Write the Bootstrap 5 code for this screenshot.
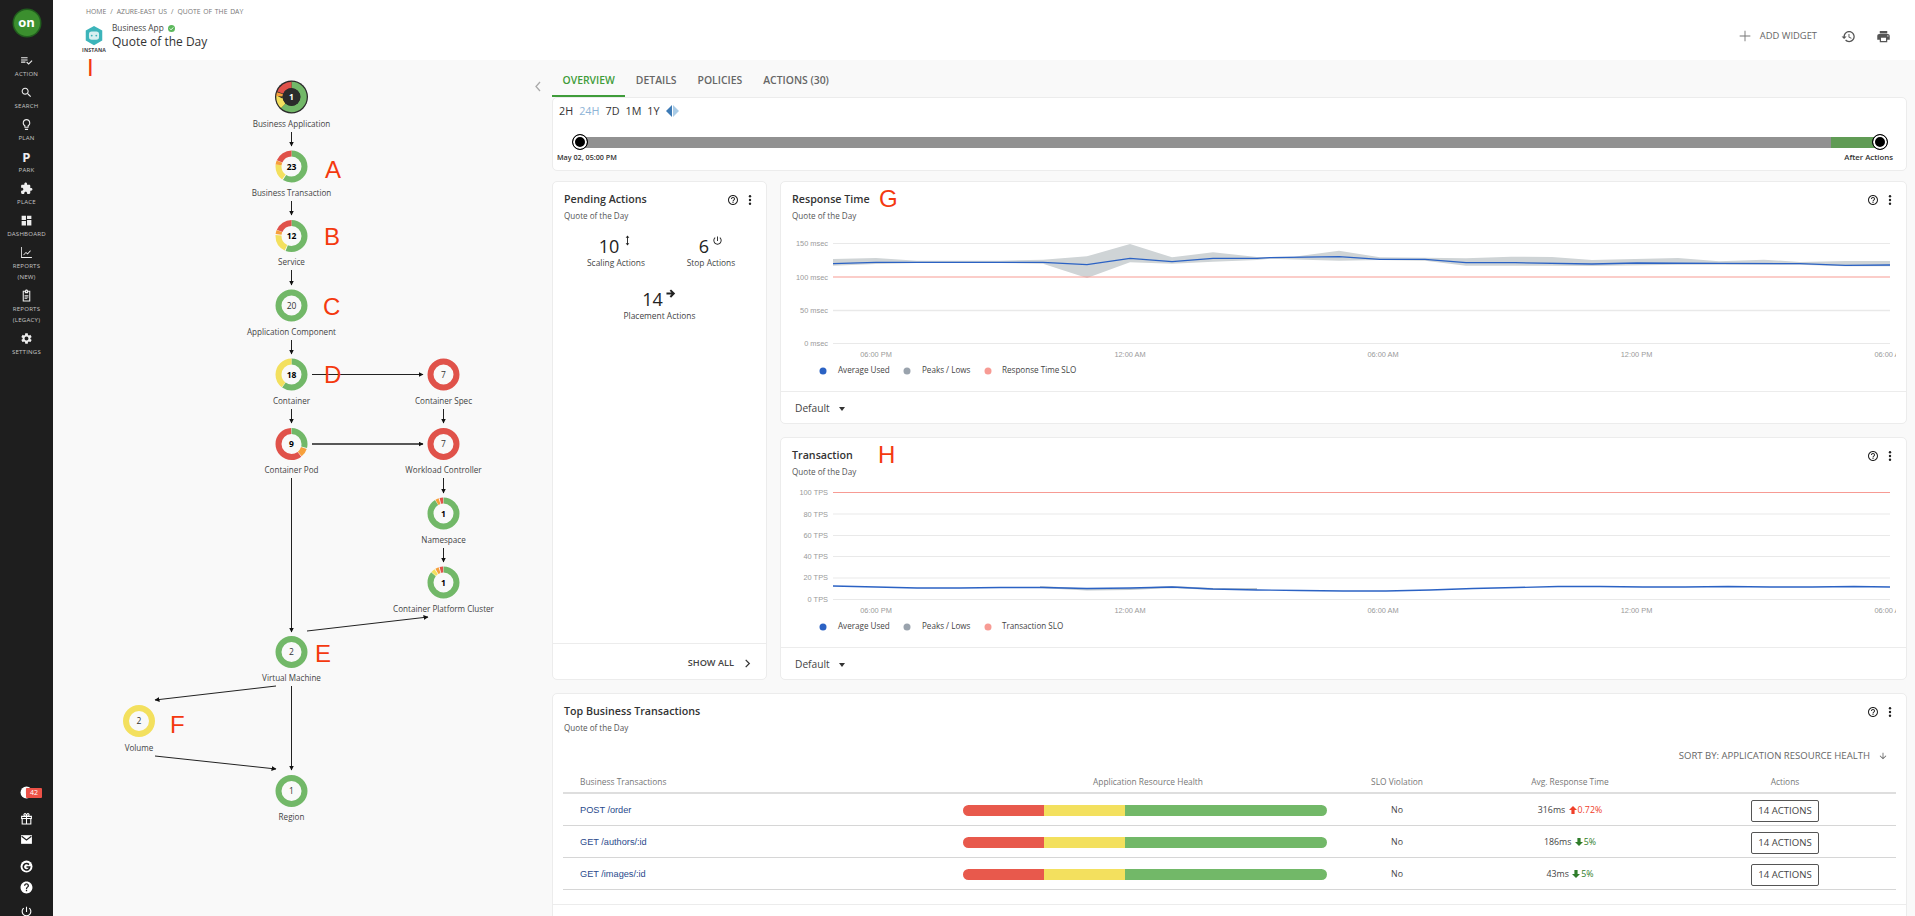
<!doctype html>
<html lang="en">
<head>
<meta charset="utf-8">
<title>Quote of the Day</title>
<link href="https://cdn.jsdelivr.net/npm/bootstrap@5.3.0/dist/css/bootstrap.min.css" rel="stylesheet">
<style>
html,body{height:916px;overflow:hidden}
body{font-family:"Open Sans","Noto Sans",sans-serif;background:#f9f9f9;color:#333;font-size:10px}
.rail{width:53px;flex:none;background:#1e1e1e;height:916px;color:#c4c4c4;overflow:hidden}
.rail-logo{width:26px;height:26px;border-radius:50%;background:#3b8f2e;box-shadow:0 0 0 1.5px #215e1e;color:#fff;font-weight:700;font-size:13px;line-height:24px;text-align:center;margin:10px auto 18px}
.rail-item{height:32px;text-align:center;font-size:6.1px;letter-spacing:.2px;line-height:11px;text-transform:uppercase}
.rail-item svg{display:block;margin:0 auto 1px;width:13px;height:13px;fill:#eee}
.rail-item.tall{height:43px}
.rail-p{display:block;font-size:13px;line-height:14px;font-weight:700;color:#eee}
.rail-foot{margin-bottom:-6px}
.rail-foot svg{display:block;margin:0 auto;width:13px;height:13px;fill:#fff}
.rail-bell{position:relative;height:13px;margin-bottom:13px}
.rail-count{position:absolute;left:26px;top:2px;background:#ec5147;color:#fff;font-size:7px;line-height:10px;width:16px;text-align:center;border-radius:1px}
.rail-gap-a{margin-top:8px!important;margin-bottom:8px!important}
.rail-gap-b{margin-top:14px!important}
.rail-gap-c{margin-top:8px!important}
.rail-gap-d{margin-top:11px!important}
.top-bar{height:60px;background:#fff;flex:none}
.crumbs{font-size:6.8px;color:#777;padding-top:7px;padding-left:33px;line-height:10px;word-spacing:1px}
.crumbs i{font-style:normal;padding:0 4px}
.title-row{padding-left:29px;margin-top:3px}
.logo-box{width:24px;margin-right:6px;margin-top:5px}
.app-kind{font-size:8.3px;line-height:12px;color:#444;margin-top:2px}
.app-name{font-size:12px;line-height:16px;color:#333}
.logo-word{font-size:5.2px;font-weight:700;letter-spacing:.1px;color:#444;line-height:6px;text-align:center}
.tool-text{font-size:9.4px;color:#666;margin:0 24px 0 7px}
.tools-end{padding:12px 24px 0 0;height:60px}
.map{width:499px;flex:none;height:856px}
.map svg{display:block;overflow:visible}
.map text{font-family:"Open Sans",sans-serif}
.map .lbl{font-size:8.1px;fill:#444;text-anchor:middle}
.map .num{font-size:8.5px;fill:#333;text-anchor:middle}
.map .numb{font-size:8.5px;font-weight:700;fill:#000;text-anchor:middle}
.map text.mark-r,.mark-r{font-family:"Liberation Sans",sans-serif;font-size:24px;color:#f4390f;fill:#f4390f;line-height:24px}
.mark-top{position:absolute;top:5px}
.panel{width:1355px;flex:none}
.tab-row{height:37px;padding-top:12px}
.tab-link{font-size:10.4px;font-weight:600;color:#666;padding:0 10.5px;height:25px;line-height:16px}
.tab-link.on{color:#3f9c3a;border-bottom:2px solid #3f9c3a}
.pane{background:#fff;border:1px solid #ececec;border-radius:5px}
.range{height:74px;padding:5px 6px;position:relative}
.range-btn{font-size:10.8px;color:#333;margin-right:6px;line-height:16px}
.range-btn.on{color:#8db4d6}
.track{position:absolute;left:27px;right:26px;top:39px;height:11px;background:#919191}
.track b{position:absolute;right:0;top:0;bottom:0;width:49px;background:#609b55}
.knob{position:absolute;width:16px;height:16px;border-radius:50%;background:#000;border:1.5px solid #000;box-shadow:inset 0 0 0 2px #fff;top:-3px}
.knob.a{left:-8px}.knob.b{right:-8px}
.range-l{position:absolute;font-weight:600;color:#333;top:54px;line-height:10px}
.range-l.s{font-size:7.2px;left:4px}
.range-l.e{font-size:7.8px;right:13px}
.pane-head{padding:9px 11px 0 11px;position:relative}
.pane-head.fixed{height:47px}
.pane-title{font-size:10.7px;font-weight:600;color:#333;line-height:16px}
.pane-sub{font-size:8.1px;color:#555;line-height:16px;margin-top:1px}
.pane-tools{position:absolute;right:10px;top:12px;gap:5px}
.pane-tools svg{width:12px;height:12px;fill:#222}
.stat{font-size:8.4px;color:#444;text-align:center;line-height:12px}
.stat-n{font-size:18px;color:#222;line-height:22px}
.stat-n svg{width:11px;height:11px;fill:#222;vertical-align:7px;margin-left:3px}
.pend{width:215px;height:499px}
.stat-area{padding-top:11px}
.stat-two{padding:0 25px 0 28px}
.w-a{width:70px}.w-b{width:60px}
.w-c{width:90px;margin-top:19px;transform:none}
.show-all{height:36px;border-top:1px solid #ececec;font-size:9.2px;font-weight:600;color:#444;padding:3px 14px 0 0;gap:9px}
.chart-foot{height:32px;border-top:1px solid #ececec;font-size:10.2px;color:#444;padding:2px 0 0 14px;gap:9px}
.caret-s{width:0;height:0;border:3.5px solid transparent;border-top:4px solid #333;border-bottom:0}
.chart-a,.chart-b{height:243px}
.chart-svg{display:block}
.chart-svg text{font-family:"Liberation Sans",sans-serif;font-size:7.4px;fill:#9a9a9a}
.chart-svg .lg{font-family:"Open Sans",sans-serif;font-size:8.1px;fill:#444}
.stack{gap:13px}
.stack-top{margin-top:10px}
.wide{height:250px;position:relative;margin-top:13px}
.sort-row{font-size:9.55px;color:#666;text-align:right;padding-right:18px;line-height:14px;position:absolute;right:0;top:55px}
.sort-row svg{width:10px;height:10px;fill:#666;margin-left:8px}
.tx-table{position:absolute;left:10px;top:78px;width:1333px;table-layout:fixed;margin:0}
.tx-table th{font-weight:400;font-size:8.4px;color:#777;height:21px;padding:0;text-align:center;vertical-align:middle;border-bottom:2px solid #dedede}
.tx-table td{font-size:8.8px;color:#444;height:32px;padding:3px 0 0;text-align:center;vertical-align:middle;border-bottom:1px solid #d6d6d6}
.tx-table td.nm{text-align:left;padding-left:17px;font-family:"Liberation Sans",sans-serif;font-size:9.2px;color:#2a4a8c}
.tx-table th.nm{text-align:left;padding-left:17px}
.tx-table .endc{padding-right:18px}
.health{display:flex;width:364px;height:11px;border-radius:6px;overflow:hidden;margin-left:13px}
.health i{display:block}
.h-r{background:#e8594c;width:81px}.h-y{background:#f3e05e;width:81px}.h-g{background:#72b868;flex:1}
.act-btn{font-size:9.6px;width:68px;height:22px;padding:0;border:1px solid #555;border-radius:2px;color:#444;background:#fff;line-height:20px}
.up{color:#f0402a}.dn{color:#2f7d2a}
.arr{display:inline-block;width:8px;height:8px;vertical-align:-1px;margin:0 1px}
.foot-line{position:absolute;left:0;right:0;top:210px;border-top:1px solid #ececec}
</style>
</head>
<body class="d-flex">
<nav class="rail d-flex flex-column">
  <div class="rail-logo">on</div>
  <div class="rail-item"><svg viewBox="0 0 24 24"><path d="M14 10H2v2h12v-2zm0-4H2v2h12V6zM2 16h8v-2H2v2zm19.500-4.500L23 13l-6.990 7-4.510-4.500L13 14l3.010 3 5.490-5.500z"/></svg>Action</div>
  <div class="rail-item"><svg viewBox="0 0 24 24"><path d="M15.500 14h-.79l-.28-.27C15.410 12.590 16 11.110 16 9.500 16 5.910 13.090 3 9.500 3S3 5.910 3 9.500 5.910 16 9.500 16c1.610 0 3.090-.59 4.230-1.570l.27.28v.79l5 4.990L20.490 19l-4.990-5zm-6 0C7.010 14 5 11.990 5 9.500S7.010 5 9.500 5 14 7.010 14 9.500 11.990 14 9.500 14z"/></svg>Search</div>
  <div class="rail-item"><svg viewBox="0 0 24 24"><path d="M9 21c0 .55.45 1 1 1h4c.55 0 1-.45 1-1v-1H9v1zm3-19C8.140 2 5 5.140 5 9c0 2.380 1.190 4.470 3 5.740V17c0 .55.45 1 1 1h6c.55 0 1-.45 1-1v-2.260c1.810-1.270 3-3.360 3-5.740 0-3.860-3.140-7-7-7zm2.850 11.100l-.85.6V16h-4v-2.300l-.85-.6C7.800 12.160 7 10.630 7 9c0-2.760 2.240-5 5-5s5 2.240 5 5c0 1.630-.8 3.160-2.150 4.100z"/></svg>Plan</div>
  <div class="rail-item"><span class="rail-p">P</span>Park</div>
  <div class="rail-item"><svg viewBox="0 0 24 24"><path d="M20.500 11H19V7c0-1.100-.9-2-2-2h-4V3.500C13 2.120 11.880 1 10.500 1S8 2.120 8 3.500V5H4c-1.100 0-1.990.9-1.990 2v3.800H3.500c1.490 0 2.700 1.210 2.700 2.700s-1.210 2.700-2.700 2.700H2V20c0 1.100.9 2 2 2h3.800v-1.500c0-1.490 1.210-2.700 2.700-2.700 1.490 0 2.700 1.210 2.700 2.700V22H17c1.100 0 2-.9 2-2v-4h1.500c1.380 0 2.500-1.120 2.500-2.500S21.880 11 20.500 11z"/></svg>Place</div>
  <div class="rail-item"><svg viewBox="0 0 24 24"><path d="M3 11h8V3H3v8zm0 10h8v-8H3v8zm10 0h8V11h-8v10zm0-18v6h8V3h-8z"/></svg>Dashboard</div>
  <div class="rail-item tall"><svg viewBox="0 0 24 24"><path d="M2 2h1.500v18.500H22V22H2zM6 16l5-5 3 2.500 5-5.500 1 1-6 6.500-3-2.500-4 4z"/></svg>Reports<br>(New)</div>
  <div class="rail-item tall"><svg viewBox="0 0 24 24"><path d="M19 3h-4.180C14.400 1.840 13.300 1 12 1c-1.300 0-2.400.84-2.820 2H5v20h14V3zm-7 0c.55 0 1 .45 1 1s-.45 1-1 1-1-.45-1-1 .45-1 1-1zm5 18H7V5h2v3h6V5h2v16zM8.500 11h7v1.500h-7zm0 3h7v1.500h-7zm0 3h5v1.500h-5z"/></svg>Reports<br>(Legacy)</div>
  <div class="rail-item"><svg viewBox="0 0 24 24"><path d="M19.140 12.940c.04-.3.06-.61.06-.94 0-.32-.02-.64-.07-.94l2.030-1.580c.18-.14.23-.41.12-.61l-1.920-3.320c-.12-.22-.37-.29-.59-.22l-2.390.96c-.5-.38-1.030-.7-1.620-.94l-.36-2.540c-.04-.24-.24-.41-.48-.41h-3.840c-.24 0-.43.17-.47.41l-.36 2.540c-.59.24-1.130.57-1.620.94l-2.390-.96c-.22-.08-.47 0-.59.22L2.740 8.870c-.12.21-.08.47.12.61l2.030 1.580c-.05.3-.09.63-.09.94s.02.64.07.94l-2.030 1.580c-.18.14-.23.41-.12.61l1.920 3.320c.12.22.37.29.59.22l2.390-.96c.5.38 1.030.7 1.620.94l.36 2.540c.05.24.24.41.48.41h3.840c.24 0 .44-.17.47-.41l.36-2.540c.59-.24 1.130-.56 1.620-.94l2.390.96c.22.08.47 0 .59-.22l1.920-3.320c.12-.22.07-.47-.12-.61l-2.010-1.580zM12 15.600c-1.980 0-3.600-1.620-3.600-3.600s1.620-3.600 3.600-3.600 3.600 1.620 3.600 3.600-1.620 3.600-3.600 3.600z"/></svg>Settings</div>
  <div class="rail-foot mt-auto">
    <div class="rail-bell"><svg viewBox="0 0 24 24"><circle cx="12" cy="12" r="11"/><rect x="11" y="5" width="2.500" height="9" fill="#1e1e1e"/></svg><span class="rail-count">42</span></div>
    <svg viewBox="0 0 24 24"><path d="M3 8h18v4H3zM4 12h16v10H4z" fill="none" stroke="#fff" stroke-width="2"/><path d="M12 8v14M12 8C8 8 6 6 8 3.500S12 5 12 8c0-3 2-7 4-4.500S16 8 12 8z" fill="none" stroke="#fff" stroke-width="2"/></svg>
    <svg viewBox="0 0 24 24" class="rail-gap-a"><path d="M2 4h20v16H2z"/><path d="M3 6l9 7 9-7" fill="none" stroke="#1e1e1e" stroke-width="2"/></svg>
    <svg viewBox="0 0 24 24" class="rail-gap-b"><circle cx="12" cy="12" r="11"/><path d="M16.500 8.500A6 6 0 1 0 18 13h-6" fill="none" stroke="#1e1e1e" stroke-width="3"/></svg>
    <svg viewBox="0 0 24 24" class="rail-gap-c"><path d="M12 1C5.900 1 1 5.900 1 12s4.900 11 11 11 11-4.900 11-11S18.100 1 12 1zm1.200 18h-2.400v-2.400h2.400V19zm2.300-7.800l-1 1c-.9.8-1.300 1.400-1.300 3h-2.400v-.5c0-1.200.5-2.300 1.300-3.100l1.400-1.400c.4-.4.7-1 .7-1.600 0-1.200-1-2.200-2.200-2.200S9.800 7.400 9.800 8.600H7.400C7.400 6 9.500 4 12 4s4.600 2 4.600 4.600c0 1-.4 1.900-1.100 2.600z"/></svg>
    <svg viewBox="0 0 24 24" class="rail-gap-d mb-1"><path d="M13 3h-2v10h2V3zm4.830 2.170l-1.420 1.420C17.990 7.860 19 9.810 19 12c0 3.870-3.130 7-7 7s-7-3.130-7-7c0-2.190 1.010-4.140 2.580-5.420L6.170 5.170C4.230 6.820 3 9.260 3 12c0 4.970 4.030 9 9 9s9-4.030 9-9c0-2.740-1.230-5.180-3.170-6.830z"/></svg>
  </div>
</nav>
<div class="flex-grow-1 d-flex flex-column min-w-0">
  <header class="top-bar d-flex justify-content-between">
    <div>
      <div class="crumbs">HOME<i>/</i>AZURE-EAST US<i>/</i>QUOTE OF THE DAY</div>
      <div class="d-flex title-row">
        <div class="logo-box">
          <svg viewBox="0 0 24 24" width="24" height="22" class="d-block"><path d="M12 1l9 5v11l-9 5-9-5V6z" fill="#3cb4ba"/><rect x="6.500" y="7" width="11" height="9" rx="3" fill="#d8f0f1"/><circle cx="9.500" cy="11.500" r="1" fill="#3cb4ba"/><circle cx="14.500" cy="11.500" r="1" fill="#3cb4ba"/></svg>
          <div class="logo-word">INSTANA</div>
        </div>
        <div>
          <div class="app-kind d-flex align-items-center">Business App<svg viewBox="0 0 12 12" width="7" height="7" class="ms-1"><circle cx="6" cy="6" r="6" fill="#5cb85c"/><path d="M3 6l2.200 2.200L9 4.200" stroke="#fff" stroke-width="1.600" fill="none"/></svg></div>
          <div class="app-name">Quote of the Day</div>
        </div>
      </div>
    </div>
    <div class="d-flex align-items-center tools-end">
      <svg viewBox="0 0 24 24" width="16" height="16" fill="#777"><path d="M20 12.700h-7.300V20h-1.400v-7.300H4v-1.400h7.300V4h1.400v7.300H20z"/></svg>
      <span class="tool-text">ADD WIDGET</span>
      <svg viewBox="0 0 24 24" width="15" height="15" fill="#555" class="me-3"><path d="M13 3c-4.970 0-9 4.030-9 9H1l3.890 3.890.07.14L9 12H6c0-3.870 3.130-7 7-7s7 3.130 7 7-3.130 7-7 7c-1.930 0-3.680-.79-4.940-2.060l-1.420 1.420C8.270 19.990 10.510 21 13 21c4.970 0 9-4.030 9-9s-4.030-9-9-9zm-1 5v5l4.280 2.540.72-1.210-3.500-2.080V8H12z"/></svg>
      <svg viewBox="0 0 24 24" width="15" height="15" fill="#555" class="ms-1"><path d="M19 8H5c-1.660 0-3 1.340-3 3v6h4v4h12v-4h4v-6c0-1.660-1.340-3-3-3zm-3 11H8v-5h8v5zm3-7c-.55 0-1-.45-1-1s.45-1 1-1 1 .45 1 1-.45 1-1 1zm-1-9H6v4h12V3z"/></svg>
    </div>
  </header>
  <div class="d-flex flex-grow-1">
    <div class="map">
      <svg width="499" height="856" viewBox="53 60 499 856">
        <defs>
          <marker id="ah" viewBox="0 0 10 10" refX="9" refY="5" markerWidth="5" markerHeight="5" markerUnits="userSpaceOnUse" orient="auto"><path d="M0 0L10 5L0 10z" fill="#111"/></marker>
        </defs>
        <g stroke="#222" stroke-width="1" fill="none">
          <path d="M291.500 132V146" marker-end="url(#ah)"/><path d="M291.500 201V215" marker-end="url(#ah)"/><path d="M291.500 270V285" marker-end="url(#ah)"/><path d="M291.500 340V354" marker-end="url(#ah)"/><path d="M291.500 409V423" marker-end="url(#ah)"/><path d="M291.500 478V632" marker-end="url(#ah)"/>
          <path d="M443.500 409V423" marker-end="url(#ah)"/><path d="M443.500 478V493" marker-end="url(#ah)"/><path d="M443.500 548V562" marker-end="url(#ah)"/>
          <path d="M312 374.500H423" marker-end="url(#ah)"/><path d="M312 444H423" marker-end="url(#ah)" stroke-width="1.500"/>
          <path d="M307 631L428 617" marker-end="url(#ah)"/><path d="M276 686L155 700" marker-end="url(#ah)"/><path d="M291.500 686V770" marker-end="url(#ah)"/><path d="M155 756L276 769" marker-end="url(#ah)"/>
        </g>
        <circle cx="291.500" cy="97" r="16.500" fill="#2b2b2b"/>
        <g transform="translate(291.500 97) rotate(-90)" fill="none" stroke-width="6.500">
          <circle r="12" pathLength="100" stroke="#72b868" stroke-dasharray="62 100"/>
          <circle r="12" pathLength="100" stroke="#f3e05e" stroke-dasharray="13 100" stroke-dashoffset="-62"/>
          <circle r="12" pathLength="100" stroke="#f7a03c" stroke-dasharray="4 100" stroke-dashoffset="-76"/>
          <circle r="12" pathLength="100" stroke="#e0524a" stroke-dasharray="19 100" stroke-dashoffset="-81"/>
        </g>
        <circle cx="291.500" cy="97" r="9" fill="#2b2b2b"/>
        <text x="291.500" y="100" class="num" fill="#fff" style="fill:#fff;font-weight:700">1</text>
        <text x="291.500" y="127" class="lbl">Business Application</text>
        <g transform="translate(291.500 166.500) rotate(-90)" fill="none" stroke-width="6">
          <circle r="13" pathLength="100" stroke="#72b868" stroke-dasharray="59 100"/>
          <circle r="13" pathLength="100" stroke="#f3e05e" stroke-dasharray="17 100" stroke-dashoffset="-60"/>
          <circle r="13" pathLength="100" stroke="#f7a03c" stroke-dasharray="4 100" stroke-dashoffset="-77"/>
          <circle r="13" pathLength="100" stroke="#e0524a" stroke-dasharray="18.500 100" stroke-dashoffset="-81.500"/>
        </g>
        <text x="291.500" y="169.500" class="numb">23</text>
        <text x="291.500" y="196" class="lbl">Business Transaction</text>
        <g transform="translate(291.500 236) rotate(-90)" fill="none" stroke-width="6">
          <circle r="13" pathLength="100" stroke="#72b868" stroke-dasharray="56 100"/>
          <circle r="13" pathLength="100" stroke="#f3e05e" stroke-dasharray="19 100" stroke-dashoffset="-57"/>
          <circle r="13" pathLength="100" stroke="#f7a03c" stroke-dasharray="4 100" stroke-dashoffset="-77"/>
          <circle r="13" pathLength="100" stroke="#e0524a" stroke-dasharray="18.500 100" stroke-dashoffset="-81.500"/>
        </g>
        <text x="291.500" y="239" class="numb">12</text>
        <text x="291.500" y="265" class="lbl">Service</text>
        <circle cx="291.500" cy="305.500" r="13" fill="none" stroke="#72b868" stroke-width="6"/>
        <text x="291.500" y="308.500" class="num">20</text>
        <text x="291.500" y="335" class="lbl">Application Component</text>
        <g transform="translate(291.500 374.500) rotate(-90)" fill="none" stroke-width="6">
          <circle r="13" pathLength="100" stroke="#72b868" stroke-dasharray="60 100"/>
          <circle r="13" pathLength="100" stroke="#f3e05e" stroke-dasharray="39.500 100" stroke-dashoffset="-60.500"/>
        </g>
        <text x="291.500" y="377.500" class="numb">18</text>
        <text x="291.500" y="404" class="lbl">Container</text>
        <g transform="translate(291.500 444) rotate(-90)" fill="none" stroke-width="6">
          <circle r="13" pathLength="100" stroke="#72b868" stroke-dasharray="29 100"/>
          <circle r="13" pathLength="100" stroke="#f7a03c" stroke-dasharray="9 100" stroke-dashoffset="-30"/>
          <circle r="13" pathLength="100" stroke="#e0524a" stroke-dasharray="60 100" stroke-dashoffset="-39.500"/>
        </g>
        <text x="291.500" y="447" class="numb">9</text>
        <text x="291.500" y="473" class="lbl">Container Pod</text>
        <circle cx="443.500" cy="374.500" r="13" fill="none" stroke="#e0524a" stroke-width="6"/>
        <text x="443.500" y="377.500" class="num">7</text>
        <text x="443.500" y="404" class="lbl">Container Spec</text>
        <circle cx="443.500" cy="444" r="13" fill="none" stroke="#e0524a" stroke-width="6"/>
        <text x="443.500" y="447" class="num">7</text>
        <text x="443.500" y="473" class="lbl">Workload Controller</text>
        <g transform="translate(443.500 513.500) rotate(-90)" fill="none" stroke-width="6">
          <circle r="13" pathLength="100" stroke="#72b868" stroke-dasharray="91 100"/>
          <circle r="13" pathLength="100" stroke="#f7a03c" stroke-dasharray="3.500 100" stroke-dashoffset="-91.500"/>
          <circle r="13" pathLength="100" stroke="#e0524a" stroke-dasharray="3.500 100" stroke-dashoffset="-96"/>
        </g>
        <text x="443.500" y="516.500" class="numb">1</text>
        <text x="443.500" y="543" class="lbl">Namespace</text>
        <g transform="translate(443.500 582.500) rotate(-90)" fill="none" stroke-width="6">
          <circle r="13" pathLength="100" stroke="#72b868" stroke-dasharray="86 100"/>
          <circle r="13" pathLength="100" stroke="#f3e05e" stroke-dasharray="4 100" stroke-dashoffset="-86.500"/>
          <circle r="13" pathLength="100" stroke="#f7a03c" stroke-dasharray="3.500 100" stroke-dashoffset="-91.500"/>
          <circle r="13" pathLength="100" stroke="#e0524a" stroke-dasharray="3.500 100" stroke-dashoffset="-96"/>
        </g>
        <text x="443.500" y="585.500" class="numb">1</text>
        <text x="443.500" y="612" class="lbl">Container Platform Cluster</text>
        <circle cx="291.500" cy="652" r="13" fill="none" stroke="#72b868" stroke-width="6"/>
        <text x="291.500" y="655" class="num">2</text>
        <text x="291.500" y="681" class="lbl">Virtual Machine</text>
        <circle cx="139" cy="721" r="13" fill="none" stroke="#f3e05e" stroke-width="6"/>
        <text x="139" y="724" class="num">2</text>
        <text x="139" y="751" class="lbl">Volume</text>
        <circle cx="291.500" cy="791" r="13" fill="none" stroke="#72b868" stroke-width="6"/>
        <text x="291.500" y="794" class="num">1</text>
        <text x="291.500" y="820" class="lbl">Region</text>
        <text x="87" y="76" class="mark-r">I</text>
        <text x="325" y="178" class="mark-r">A</text>
        <text x="324" y="245" class="mark-r">B</text>
        <text x="323" y="315" class="mark-r">C</text>
        <text x="324" y="383" class="mark-r">D</text>
        <text x="315" y="662" class="mark-r">E</text>
        <text x="170" y="733" class="mark-r">F</text>
        <path d="M540 82l-4 4.500 4 4.500" fill="none" stroke="#aaa" stroke-width="1.300"/>
      </svg>
    </div>
    <main class="panel">
      <div class="tab-row d-flex">
        <div class="tab-link on">OVERVIEW</div>
        <div class="tab-link">DETAILS</div>
        <div class="tab-link">POLICIES</div>
        <div class="tab-link">ACTIONS (30)</div>
      </div>
      <section class="pane range">
        <div class="d-flex align-items-center">
          <span class="range-btn">2H</span><span class="range-btn on">24H</span><span class="range-btn">7D</span><span class="range-btn">1M</span><span class="range-btn">1Y</span>
          <svg viewBox="0 0 13 12" width="13" height="12"><path d="M6 0v12L0 6z" fill="#3d7ab5"/><path d="M7 0v12l6-6z" fill="#a9cbe6"/></svg>
        </div>
        <div class="track"><b></b><span class="knob a"></span><span class="knob b"></span></div>
        <div class="range-l s">May 02, 05:00 PM</div>
        <div class="range-l e">After Actions</div>
      </section>
      <div class="d-flex stack stack-top">
        <section class="pane pend d-flex flex-column">
          <div class="pane-head">
            <div class="pane-title">Pending Actions</div><div class="pane-sub">Quote of the Day</div>
            <div class="pane-tools d-flex">
              <svg viewBox="0 0 24 24"><path d="M11 18h2v-2h-2v2zm1-16C6.480 2 2 6.480 2 12s4.480 10 10 10 10-4.480 10-10S17.520 2 12 2zm0 18c-4.410 0-8-3.590-8-8s3.590-8 8-8 8 3.590 8 8-3.590 8-8 8zm0-14c-2.210 0-4 1.790-4 4h2c0-1.100.9-2 2-2s2 .9 2 2c0 2-3 1.750-3 5h2c0-2.250 3-2.500 3-5 0-2.210-1.790-4-4-4z"/></svg>
              <svg viewBox="0 0 24 24"><circle cx="12" cy="4.500" r="2.400"/><circle cx="12" cy="12" r="2.400"/><circle cx="12" cy="19.500" r="2.400"/></svg>
            </div>
          </div>
          <div class="stat-area">
            <div class="d-flex justify-content-between stat-two">
              <div class="stat w-a"><div class="stat-n">10<svg viewBox="0 0 24 24"><path d="M13 6h3l-4-5-4 5h3v12H8l4 5 4-5h-3z"/></svg></div>Scaling Actions</div>
              <div class="stat w-b"><div class="stat-n">6<svg viewBox="0 0 24 24"><path d="M13 3h-2v10h2V3zm4.830 2.170l-1.420 1.420C17.990 7.860 19 9.810 19 12c0 3.870-3.130 7-7 7s-7-3.130-7-7c0-2.190 1.010-4.140 2.580-5.420L6.170 5.170C4.230 6.820 3 9.260 3 12c0 4.970 4.030 9 9 9s9-4.030 9-9c0-2.740-1.230-5.180-3.170-6.830z"/></svg></div>Stop Actions</div>
            </div>
            <div class="stat mx-auto w-c"><div class="stat-n">14<svg viewBox="0 0 24 24"><path d="M11 3l-3 3 4 4H1v4h11l-4 4 3 3 9-9z"/></svg></div>Placement Actions</div>
          </div>
          <div class="show-all d-flex justify-content-end align-items-center mt-auto">SHOW ALL
            <svg viewBox="0 0 10 10" width="9" height="9"><path d="M3 1l4 4-4 4" fill="none" stroke="#333" stroke-width="1.400"/></svg></div>
        </section>
        <div class="d-flex flex-column stack flex-grow-1 min-w-0">
          <section class="pane chart-a d-flex flex-column">
            <div class="pane-head fixed">
              <div class="pane-title">Response Time</div><div class="pane-sub">Quote of the Day</div>
              <span class="mark-r mark-top" style="left:98px">G</span>
              <div class="pane-tools d-flex">
                <svg viewBox="0 0 24 24"><path d="M11 18h2v-2h-2v2zm1-16C6.480 2 2 6.480 2 12s4.480 10 10 10 10-4.480 10-10S17.520 2 12 2zm0 18c-4.410 0-8-3.590-8-8s3.590-8 8-8 8 3.590 8 8-3.590 8-8 8zm0-14c-2.210 0-4 1.790-4 4h2c0-1.100.9-2 2-2s2 .9 2 2c0 2-3 1.750-3 5h2c0-2.250 3-2.500 3-5 0-2.210-1.790-4-4-4z"/></svg>
                <svg viewBox="0 0 24 24"><circle cx="12" cy="4.500" r="2.400"/><circle cx="12" cy="12" r="2.400"/><circle cx="12" cy="19.500" r="2.400"/></svg>
              </div>
            </div>
            <div class="flex-grow-1">
              <svg class="chart-svg" width="1125" height="163" viewBox="781 229 1125 163">
                <defs><clipPath id="cr"><rect x="781" y="229" width="1115" height="163"/></clipPath><clipPath id="ct"><rect x="781" y="485" width="1115" height="163"/></clipPath></defs>
                <g stroke="#e9e9e9" stroke-width="1"><path d="M833 244.500H1890M833 344.500H1890"/><path d="M833 311.500H1890" stroke-width="1.500"/></g>
                <path d="M833 260L876 259L917 261.700L960 261.700L1000 261.700L1043 260.700L1087 257.300L1130 245L1172 258.300L1213 253.300L1257 258L1294 257.700L1339 251.700L1380 258.300L1425 258.700L1466 259.300L1511 257.700L1552 258L1592 261L1678 259L1719 262.300L1764 260.700L1800 263L1845.500 262L1890 262L1890 267.300L1845 267.300L1800 265.700L1678 265.700L1592 267L1552 266.700L1466 266.700L1425 261.700L1380 261L1339 261.700L1270 259.700L1257 261L1213 262.700L1172 264.700L1130 263.300L1087 279L1043 264.700L1000 264L960 264L917 264L876 265L833 266.700Z" fill="#cfd4d6"/>
                <path d="M833 278H1890" stroke="#f79b94" stroke-width="1.200"/>
                <path d="M833 264.700L876 263.300L917 263.300L960 263.300L1000 263.300L1043 263.300L1087 265.700L1130 259.300L1172 262.700L1213 259.300L1257 259.300L1270 258.700L1339 257.700L1380 260.300L1425 260.300L1466 263.700L1515 263.700L1592 265L1637 264L1719 264.300L1800 264.700L1845.500 266.300L1890 266" fill="none" stroke="#2b62c4" stroke-width="1.300"/>
                <g text-anchor="end"><text x="828" y="247">150 msec</text><text x="828" y="280.500">100 msec</text><text x="828" y="314">50 msec</text><text x="828" y="347">0 msec</text></g>
                <g text-anchor="middle" clip-path="url(#cr)"><text x="876" y="358">06:00 PM</text><text x="1130" y="358">12:00 AM</text><text x="1383" y="358">06:00 AM</text><text x="1636.500" y="358">12:00 PM</text><text x="1890" y="358">06:00 AM</text></g>
                <circle cx="823" cy="372" r="3.500" fill="#2b62c4"/><text x="838" y="373.500" class="lg">Average Used</text>
                <circle cx="907" cy="372" r="3.500" fill="#9aa3ad"/><text x="922" y="373.500" class="lg">Peaks / Lows</text>
                <circle cx="988" cy="372" r="3.500" fill="#f79b94"/><text x="1002" y="373.500" class="lg">Response Time SLO</text>
              </svg>
            </div>
            <div class="chart-foot d-flex align-items-center">Default<span class="caret-s"></span></div>
          </section>
          <section class="pane chart-b d-flex flex-column">
            <div class="pane-head fixed">
              <div class="pane-title">Transaction</div><div class="pane-sub">Quote of the Day</div>
              <span class="mark-r mark-top" style="left:97px">H</span>
              <div class="pane-tools d-flex">
                <svg viewBox="0 0 24 24"><path d="M11 18h2v-2h-2v2zm1-16C6.480 2 2 6.480 2 12s4.480 10 10 10 10-4.480 10-10S17.520 2 12 2zm0 18c-4.410 0-8-3.590-8-8s3.590-8 8-8 8 3.590 8 8-3.590 8-8 8zm0-14c-2.210 0-4 1.790-4 4h2c0-1.100.9-2 2-2s2 .9 2 2c0 2-3 1.750-3 5h2c0-2.250 3-2.500 3-5 0-2.210-1.790-4-4-4z"/></svg>
                <svg viewBox="0 0 24 24"><circle cx="12" cy="4.500" r="2.400"/><circle cx="12" cy="12" r="2.400"/><circle cx="12" cy="19.500" r="2.400"/></svg>
              </div>
            </div>
            <div class="flex-grow-1">
              <svg class="chart-svg" width="1125" height="163" viewBox="781 485 1125 163">
                <g stroke="#e9e9e9" stroke-width="1"><path d="M833 515H1890M833 536.500H1890M833 557.500H1890M833 579H1890M833 600.500H1890"/></g>
                <path d="M833 493.500H1890" stroke="#f79b94" stroke-width="1.200"/>
                <path d="M1040 588L1087 590.500L1130 590L1172 588L1213 590L1257 590" fill="none" stroke="#bfc7cc" stroke-width="2"/>
                <path d="M833 587L876 588L917 589L960 589L1000 588.500L1043 588.500L1087 589.500L1130 589L1172 588L1213 590L1257 591L1300 591.500L1343 592L1386 592L1430 591L1473 589.500L1516 588.500L1558 587.500L1600 587.500L1643 588L1685 588L1728 587.500L1770 588L1812 588L1854 587.500L1890 588" fill="none" stroke="#2b62c4" stroke-width="1.300"/>
                <g text-anchor="end"><text x="828" y="496">100 TPS</text><text x="828" y="517.500">80 TPS</text><text x="828" y="539">60 TPS</text><text x="828" y="560">40 TPS</text><text x="828" y="581">20 TPS</text><text x="828" y="603">0 TPS</text></g>
                <g text-anchor="middle" clip-path="url(#ct)"><text x="876" y="614">06:00 PM</text><text x="1130" y="614">12:00 AM</text><text x="1383" y="614">06:00 AM</text><text x="1636.500" y="614">12:00 PM</text><text x="1890" y="614">06:00 AM</text></g>
                <circle cx="823" cy="628" r="3.500" fill="#2b62c4"/><text x="838" y="629.500" class="lg">Average Used</text>
                <circle cx="907" cy="628" r="3.500" fill="#9aa3ad"/><text x="922" y="629.500" class="lg">Peaks / Lows</text>
                <circle cx="988" cy="628" r="3.500" fill="#f79b94"/><text x="1002" y="629.500" class="lg">Transaction SLO</text>
              </svg>
            </div>
            <div class="chart-foot d-flex align-items-center">Default<span class="caret-s"></span></div>
          </section>
        </div>
      </div>
      <section class="pane wide">
        <div class="pane-head">
          <div class="pane-title">Top Business Transactions</div><div class="pane-sub">Quote of the Day</div>
          <div class="pane-tools d-flex">
            <svg viewBox="0 0 24 24"><path d="M11 18h2v-2h-2v2zm1-16C6.480 2 2 6.480 2 12s4.480 10 10 10 10-4.480 10-10S17.520 2 12 2zm0 18c-4.410 0-8-3.590-8-8s3.590-8 8-8 8 3.590 8 8-3.590 8-8 8zm0-14c-2.210 0-4 1.790-4 4h2c0-1.100.9-2 2-2s2 .9 2 2c0 2-3 1.750-3 5h2c0-2.250 3-2.500 3-5 0-2.210-1.790-4-4-4z"/></svg>
            <svg viewBox="0 0 24 24"><circle cx="12" cy="4.500" r="2.400"/><circle cx="12" cy="12" r="2.400"/><circle cx="12" cy="19.500" r="2.400"/></svg>
          </div>
        </div>
        <div class="sort-row">SORT BY: APPLICATION RESOURCE HEALTH<svg viewBox="0 0 24 24"><path d="M20 12l-1.400-1.400L13 16.200V4h-2v12.200l-5.600-5.600L4 12l8 8z"/></svg></div>
        <table class="tx-table table table-borderless">
          <colgroup><col style="width:387px"><col style="width:396px"><col style="width:102px"><col style="width:244px"><col style="width:204px"></colgroup>
          <thead><tr><th class="nm">Business Transactions</th><th>Application Resource Health</th><th>SLO Violation</th><th>Avg. Response Time</th><th class="endc">Actions</th></tr></thead>
          <tbody>
            <tr><td class="nm">POST /order</td><td><div class="health"><i class="h-r"></i><i class="h-y"></i><i class="h-g"></i></div></td><td>No</td><td>316ms <svg class="arr" viewBox="0 0 10 10"><path d="M5 0l5 5H7v5H3V5H0z" fill="#f0402a"/></svg><span class="up">0.72%</span></td><td class="endc"><button class="btn act-btn">14 ACTIONS</button></td></tr>
            <tr><td class="nm">GET /authors/:id</td><td><div class="health"><i class="h-r"></i><i class="h-y"></i><i class="h-g"></i></div></td><td>No</td><td>186ms <svg class="arr" viewBox="0 0 10 10"><path d="M5 10L0 5h3V0h4v5h3z" fill="#2f7d2a"/></svg><span class="dn">5%</span></td><td class="endc"><button class="btn act-btn">14 ACTIONS</button></td></tr>
            <tr><td class="nm">GET /images/:id</td><td><div class="health"><i class="h-r"></i><i class="h-y"></i><i class="h-g"></i></div></td><td>No</td><td>43ms <svg class="arr" viewBox="0 0 10 10"><path d="M5 10L0 5h3V0h4v5h3z" fill="#2f7d2a"/></svg><span class="dn">5%</span></td><td class="endc"><button class="btn act-btn">14 ACTIONS</button></td></tr>
          </tbody>
        </table>
        <div class="foot-line"></div>
      </section>
    </main>
  </div>
</div>
<script src="https://cdn.jsdelivr.net/npm/bootstrap@5.3.0/dist/js/bootstrap.bundle.min.js"></script>
</body>
</html>
